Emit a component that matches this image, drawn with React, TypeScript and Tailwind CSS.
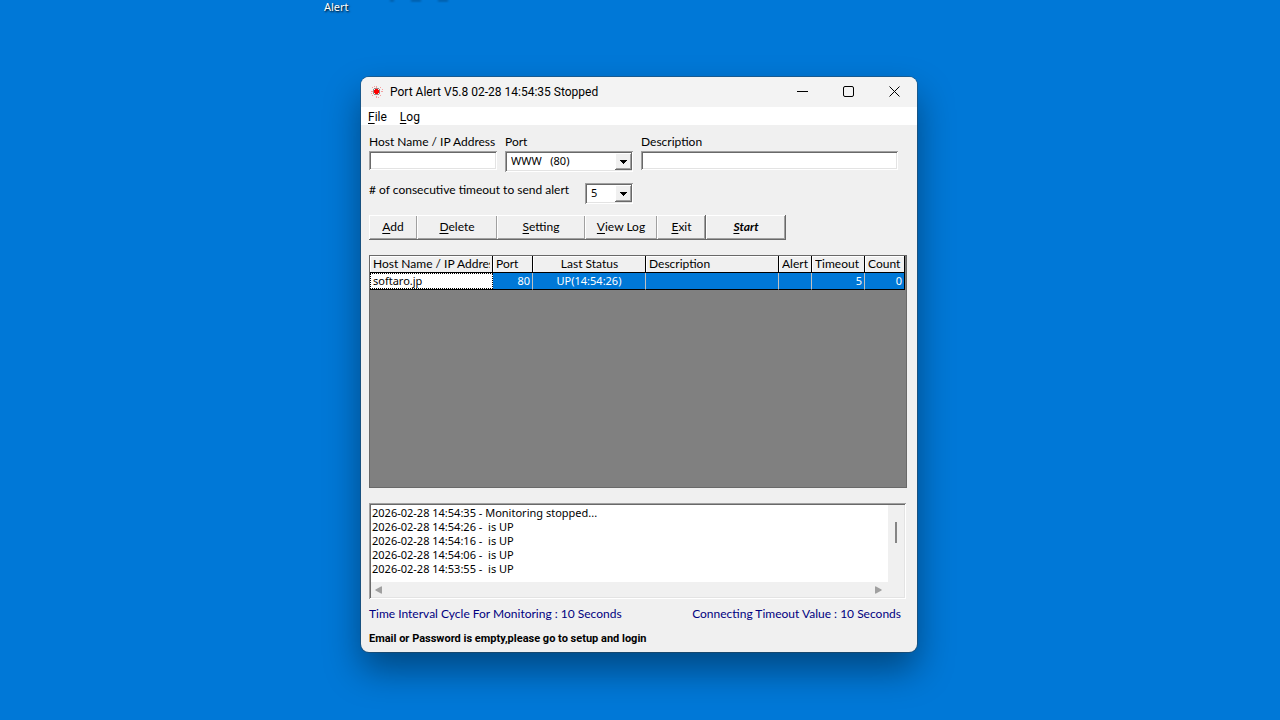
import clsx from 'clsx';

const SUNKEN =
  'shadow-[inset_1px_1px_#a0a0a0,inset_-1px_-1px_#ffffff,inset_2px_2px_#696969,inset_-2px_-2px_#e3e3e3]';
const RAISED =
  'shadow-[inset_-1px_-1px_#696969,inset_1px_1px_#ffffff,inset_-2px_-2px_#a0a0a0]';
// Shares its dark right edge with the next button
const RAISED_JOINED =
  'shadow-[inset_0_-1px_#696969,inset_1px_1px_#ffffff,inset_-1px_-2px_#a0a0a0]';

const TOOLBAR = [
  { label: 'Add', width: 'w-12', edge: RAISED_JOINED },
  { label: 'Delete', width: 'w-20', edge: RAISED_JOINED },
  { label: 'Setting', width: 'w-[88px]', edge: RAISED_JOINED },
  { label: 'View Log', width: 'w-[72px]', edge: RAISED_JOINED },
  { label: 'Exit', width: 'w-[49px]', edge: RAISED },
  { label: 'Start', width: 'w-20', edge: RAISED, strong: true },
];

const COLUMNS = [
  { title: 'Host Name / IP Address', width: 'w-[123px]', align: 'text-left', cell: 'text-left' },
  { title: 'Port', width: 'w-[40px]', align: 'text-left', cell: 'text-right' },
  { title: 'Last Status', width: 'w-[113px]', align: 'text-center', cell: 'text-center' },
  { title: 'Description', width: 'w-[133px]', align: 'text-left', cell: 'text-left' },
  { title: 'Alert', width: 'w-[33px]', align: 'text-left', cell: 'text-left' },
  { title: 'Timeout', width: 'w-[53px]', align: 'text-left', cell: 'text-right' },
  { title: 'Count', width: 'w-[40px]', align: 'text-left', cell: 'text-right' },
];

const HOSTS = [['softaro.jp', '80', 'UP(14:54:26)', '', '', '5', '0']];

const LOG_LINES = [
  '2026-02-28 14:54:35 - Monitoring stopped...',
  '2026-02-28 14:54:26 -  is UP',
  '2026-02-28 14:54:16 -  is UP',
  '2026-02-28 14:54:06 -  is UP',
  '2026-02-28 14:53:55 -  is UP',
];

function Mnemonic({ text }: { text: string }) {
  return (
    <>
      <span className="underline underline-offset-2">{text[0]}</span>
      {text.slice(1)}
    </>
  );
}

function AppIcon() {
  return (
    <svg width="12" height="12" viewBox="0 0 12 12" shapeRendering="crispEdges" aria-hidden="true">
      <path
        fill="#f5a0a0"
        d="M5 0h1v2h-1zM5 10h1v2h-1zM0 5h2v1h-2zM10 5h2v1h-2zM1 1h1v1h-1zM9 1h1v1h-1zM1 9h1v1h-1zM9 9h1v1h-1zM3 0h1v1h-1zM7 11h1v1h-1zM0 7h1v1h-1zM11 3h1v1h-1z"
      />
      <path fill="#9a8a8a" d="M3 2h5v1h-5zM2 3h1v5h-1zM8 3h1v5h-1zM3 8h5v1h-5z" />
      <path fill="#ff0000" d="M4 3h3v1h1v3h-1v1h-3v-1h-1v-3h1z" />
    </svg>
  );
}

function TitleBar() {
  const button = 'flex h-full w-[46px] items-center justify-center pb-0.5';
  return (
    <header className="flex h-[30px] items-center bg-[#f3f3f3] pl-2.5 font-['Roboto',sans-serif]">
      <AppIcon />
      <h1 className="ml-[7px] flex-1 text-[12px] leading-4">Port Alert V5.8 02-28 14:54:35 Stopped</h1>
      <button type="button" aria-label="Minimize" className={button}>
        <svg width="11" height="11" viewBox="0 0 11 11" stroke="#000">
          <path d="M0 5.5h11" />
        </svg>
      </button>
      <button type="button" aria-label="Maximize" className={button}>
        <svg width="11" height="11" viewBox="0 0 11 11" stroke="#000" fill="none">
          <rect x="0.5" y="0.5" width="10" height="10" rx="1.5" />
        </svg>
      </button>
      <button type="button" aria-label="Close" className={button}>
        <svg width="11" height="11" viewBox="0 0 11 11" stroke="#000">
          <path d="M0.5 0.5l10 10M10.5 0.5l-10 10" />
        </svg>
      </button>
    </header>
  );
}

function Combo({ id, value, className }: { id: string; value: string; className: string }) {
  return (
    <div className={clsx('relative h-[21px] bg-white', SUNKEN, className)}>
      <select
        id={id}
        className="h-full w-full appearance-none bg-transparent pb-px pl-1.5 font-['Noto_Sans',sans-serif] text-[11px] leading-4 whitespace-pre outline-none"
      >
        <option>{value}</option>
      </select>
      <span
        className={clsx(
          'pointer-events-none absolute top-0.5 right-px flex h-[17px] w-[17px] items-center justify-center bg-[#f0f0f0]',
          RAISED,
        )}
      >
        <svg width="7" height="4" viewBox="0 0 7 4" shapeRendering="crispEdges" aria-hidden="true">
          <path d="M0 0h7v1h-1v1h-1v1h-1v1h-1v-1h-1v-1h-1v-1h-1z" />
        </svg>
      </span>
    </div>
  );
}

function HostForm() {
  const input = clsx('h-[19px] w-full bg-white px-1 outline-none', SUNKEN);
  return (
    <form>
      <div className="flex gap-2 pr-[9px]">
        <div className="flex w-32 flex-col gap-px">
          <label htmlFor="host" className="whitespace-nowrap">Host Name / IP Address</label>
          <input id="host" type="text" className={input} />
        </div>
        <div className="flex w-32 flex-col gap-px">
          <label htmlFor="port">Port</label>
          <Combo id="port" value={'WWW\u00a0\u00a0\u00a0(80)'} className="w-full" />
        </div>
        <div className="flex flex-1 flex-col gap-px">
          <label htmlFor="description">Description</label>
          <input id="description" type="text" className={input} />
        </div>
      </div>
      <div className="mt-[11px] flex items-start">
        <label htmlFor="timeouts" className="w-[216px] leading-[14px] whitespace-nowrap">
          # of consecutive timeout to send alert
        </label>
        <Combo id="timeouts" value="5" className="w-12" />
      </div>
    </form>
  );
}

function HostGrid() {
  return (
    <div className="mt-[15px] h-[233px] overflow-hidden border border-[#696969] bg-[#808080]">
      <table className="w-[535px] table-fixed border-separate border-spacing-0">
        <thead>
          <tr>
            {COLUMNS.map((c) => (
              <th
                key={c.title}
                className={clsx(
                  'h-[17px] border-r border-b border-black bg-[#f0f0f0] p-0 pr-0.5 pl-[3px] leading-4 font-normal shadow-[inset_1px_1px_#ffffff]',
                  c.width,
                  c.align,
                )}
              >
                <div className="overflow-hidden whitespace-nowrap">{c.title}</div>
              </th>
            ))}
          </tr>
        </thead>
        <tbody className="font-['Noto_Sans',sans-serif] text-[11px]">
          {HOSTS.map((row) => (
            <tr key={row[0]}>
              {row.map((value, i) => (
                <td
                  key={COLUMNS[i].title}
                  className={clsx(
                    'h-[17px] border-b border-b-black p-0 leading-4',
                    i === 0 ? 'bg-white' : 'border-r bg-[#0078d7] px-0.5 text-white',
                    i === row.length - 1 ? 'border-r-black' : 'border-r-[#c0c0c0]',
                    COLUMNS[i].cell,
                  )}
                >
                  {i === 0 ? (
                    <div className="h-4 border border-dotted border-black pl-0.5 leading-[14px]">{value}</div>
                  ) : (
                    value
                  )}
                </td>
              ))}
            </tr>
          ))}
        </tbody>
      </table>
    </div>
  );
}

function LogBox() {
  return (
    <div className={clsx('mt-[15px] mr-px bg-[#f0f0f0] p-0.5', SUNKEN)}>
      <div className="flex">
        <textarea
          readOnly
          aria-label="Log"
          wrap="off"
          className="block h-[77px] flex-1 resize-none overflow-hidden bg-white pt-px pl-px font-['Noto_Sans',sans-serif] text-[11px] leading-[14px] outline-none"
          value={LOG_LINES.join('\n')}
        />
        <div className="flex w-4 justify-center pt-[17px]">
          <div className="h-[21px] w-0.5 bg-[#858585]" />
        </div>
      </div>
      <div className="flex h-[15px] items-center justify-between pr-[22px] pl-1">
        <svg width="7" height="8" viewBox="0 0 7 8" fill="#a0a0a0" aria-hidden="true">
          <path d="M6 0.5Q7 0 7 1v6q0 1 -1 0.5L0.5 4.5Q0 4 0.5 3.5z" />
        </svg>
        <svg width="7" height="8" viewBox="0 0 7 8" fill="#a0a0a0" aria-hidden="true">
          <path d="M1 0.5Q0 0 0 1v6q0 1 1 0.5L6.5 4.5Q7 4 6.5 3.5z" />
        </svg>
      </div>
    </div>
  );
}

function DesktopIcons() {
  return (
    <>
      <span className="absolute top-0 left-[324px] font-['Noto_Sans',sans-serif] text-[11px] leading-[14px] text-white [text-shadow:1px_1px_2px_#000000]">
        Alert
      </span>
      <span className="absolute top-0 left-[390px] h-px w-1 bg-[#003a6b] blur-[1px]" />
      <span className="absolute top-0 left-[411px] h-px w-2.5 bg-[#003a6b] blur-[1px]" />
      <span className="absolute top-0 left-[438px] h-px w-2.5 bg-[#003a6b] blur-[1px]" />
    </>
  );
}

export default function App() {
  return (
    <div className="relative min-h-screen overflow-hidden bg-[#0078d7] font-['Lato',sans-serif] text-[12px] leading-4 text-black">
      <DesktopIcons />
      <main className="absolute top-[77px] left-[361px] w-[556px] overflow-hidden rounded-lg bg-[#f0f0f0] shadow-[0_0_0_1px_rgba(60,60,60,0.4),0_18px_36px_rgba(0,0,0,0.4)]">
        <TitleBar />
        <nav className="flex h-[18px] items-center gap-[13px] bg-white px-[7px] pt-0.5 font-['Roboto',sans-serif]">
          <button type="button"><Mnemonic text="File" /></button>
          <button type="button"><Mnemonic text="Log" /></button>
        </nav>
        <div className="pt-[9px] pr-2.5 pb-[5px] pl-2">
          <HostForm />
          <div className="mt-[11px] flex">
            {TOOLBAR.map((b) => (
              <button
                key={b.label}
                type="button"
                className={clsx('h-[25px] bg-[#f0f0f0] pb-0.5 whitespace-nowrap', b.width, b.edge, b.strong && 'font-bold italic')}
              >
                <Mnemonic text={b.label} />
              </button>
            ))}
          </div>
          <HostGrid />
          <LogBox />
          <div className="mt-[7px] flex justify-between pr-1.5 text-[#000080]">
            <p>Time Interval Cycle For Monitoring : 10 Seconds</p>
            <p>Connecting Timeout Value : 10 Seconds</p>
          </div>
          <p className="mt-[9px] font-['Roboto',sans-serif] text-[11px] font-bold">
            Email or Password is empty,please go to setup and login
          </p>
        </div>
      </main>
    </div>
  );
}
